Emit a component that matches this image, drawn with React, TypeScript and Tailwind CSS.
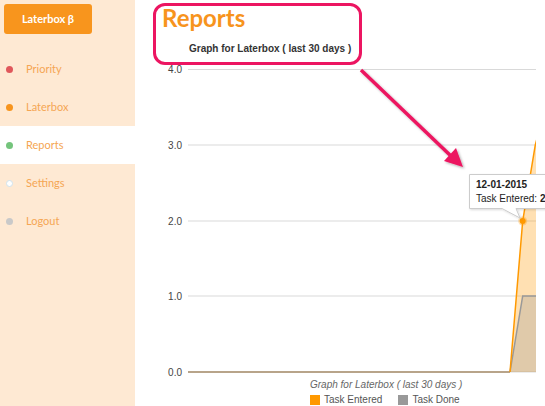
const navItems = [
    { label: "Priority", dot: "bg-[#e0575b]" },
    { label: "Laterbox", dot: "bg-[#f7941d]" },
    { label: "Reports", dot: "bg-[#74c47c]", active: true },
    { label: "Settings", dot: "bg-white border border-[#cfe3ee]" },
    { label: "Logout", dot: "bg-[#c9c9c9]" },
]

const grid = [
    { v: "4.0", y: 5.5 },
    { v: "3.0", y: 81 },
    { v: "2.0", y: 157 },
    { v: "1.0", y: 232 },
    { v: "0.0", y: 308 },
]

function Sidebar() {
    return (
        <aside className="flex h-[406px] w-[135px] shrink-0 flex-col bg-[#fee9d3] font-['Lato',sans-serif]">
            <div className="px-1 pt-1">
                <button className="flex h-[30px] w-[88px] items-center justify-center rounded-[3px] bg-[#f8951d] text-[11px] font-bold text-white">
                    Laterbox β
                </button>
            </div>
            <nav className="mt-4 flex flex-col">
                {navItems.map((item) => (
                    <div
                        key={item.label}
                        className={`flex h-[38px] items-center ${item.active ? "bg-white" : ""}`}
                    >
                        <span className={`ml-[6px] h-[7px] w-[7px] rounded-full ${item.dot}`} />
                        <span className="ml-[13px] text-[11px] text-[#f5a653]">{item.label}</span>
                    </div>
                ))}
            </nav>
        </aside>
    )
}

function Chart() {
    return (
        <svg width="410" height="316" className="block font-['Liberation_Sans',Arial,sans-serif]">
            <defs>
                <clipPath id="plot">
                    <rect x="53" y="0" width="348" height="316" />
                </clipPath>
                <filter id="tipShadow" x="-10%" y="-10%" width="130%" height="150%">
                    <feDropShadow dx="1" dy="1" stdDeviation="1" floodColor="#000" floodOpacity="0.15" />
                </filter>
            </defs>
            {grid.map((g) => (
                <g key={g.v}>
                    <line x1="53" x2="401" y1={g.y} y2={g.y} stroke="#d9d9d9" strokeWidth="1" />
                    <text x="47" y={g.y + 3.5} textAnchor="end" fontSize="10" fill="#444">
                        {g.v}
                    </text>
                </g>
            ))}
            <g clipPath="url(#plot)">
                <polygon points="375,308 387.7,157 400.3,81 401,81 401,308" fill="#ff9900" fillOpacity="0.3" />
                <polygon points="375,308 387.7,232 401,232 401,308" fill="#999" fillOpacity="0.3" />
                <line x1="53" x2="375" y1="308" y2="308" stroke="#b8a48a" strokeWidth="2" />
                <polyline points="375,308 387.7,232 401,232" fill="none" stroke="#999" strokeWidth="1.5" />
                <polyline points="375,308 387.7,157 400.3,81 403,71" fill="none" stroke="#ff9900" strokeWidth="1.5" />
                <circle cx="387.7" cy="157" r="4.5" fill="#ff9900" fillOpacity="0.3" />
                <circle cx="387.7" cy="157" r="3" fill="#ff9900" />
            </g>
            <g filter="url(#tipShadow)">
                <path
                    d="M334.5 110.5 H460 V144.5 H381 L385 154 L367 144.5 H334.5 Z"
                    fill="#fff"
                    stroke="#cccccc"
                    strokeWidth="1"
                />
            </g>
            <text x="341" y="123.5" fontSize="10" fontWeight="bold" fill="#222">
                12-01-2015
            </text>
            <text x="341" y="137.5" fontSize="10" fill="#222">
                Task Entered: <tspan fontWeight="bold">2</tspan>
            </text>
        </svg>
    )
}

function Annotation() {
    return (
        <>
            <div className="pointer-events-none absolute left-[153px] top-[3px] h-[62px] w-[209px] rounded-[12px] border-[3px] border-[#ec1561]" />
            <svg className="pointer-events-none absolute left-0 top-0" width="545" height="406">
                <defs>
                    <filter id="arrowShadow" x="-20%" y="-20%" width="140%" height="140%">
                        <feDropShadow dx="1.5" dy="1.5" stdDeviation="1" floodColor="#000" floodOpacity="0.3" />
                    </filter>
                </defs>
                <g filter="url(#arrowShadow)">
                    <line x1="361" y1="70" x2="452" y2="157" stroke="#ec1561" strokeWidth="3.5" />
                    <polygon points="463,167 444,161 456,148" fill="#ec1561" />
                </g>
            </svg>
        </>
    )
}

export default function App() {
    return (
        <div className="relative flex h-[406px] w-[545px] overflow-hidden bg-white">
            <Sidebar />
            <main className="flex flex-1 flex-col">
                <header className="h-[64px] pl-[27px] pt-[4px]">
                    <h1 className="font-['Lato',sans-serif] text-[24px] font-bold leading-[28px] text-[#f7941d]">
                        Reports
                    </h1>
                    <p className="ml-[27px] mt-[11px] font-['Liberation_Sans',Arial,sans-serif] text-[10px] font-bold leading-[12px] text-[#333]">
                        Graph for Laterbox ( last 30 days )
                    </p>
                </header>
                <Chart />
                <p className="ml-[175px] font-['Liberation_Sans',Arial,sans-serif] text-[10px] italic leading-[12px] text-[#666]">
                    Graph for Laterbox ( last 30 days )
                </p>
                <div className="ml-[175px] mt-[3px] flex items-center gap-[4px] font-['Liberation_Sans',Arial,sans-serif] text-[10px] leading-[12px] text-[#555]">
                    <span className="h-[10px] w-[10px] bg-[#ff9900]" />
                    <span>Task Entered</span>
                    <span className="ml-[12px] h-[10px] w-[10px] bg-[#999]" />
                    <span>Task Done</span>
                </div>
            </main>
            <Annotation />
        </div>
    )
}
